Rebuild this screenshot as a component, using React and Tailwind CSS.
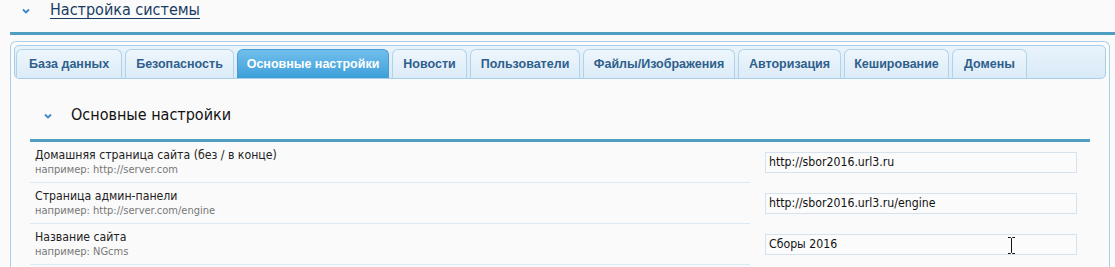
import React from "react";

const tabs = [
  { label: "База данных", w: "w-[106px]" },
  { label: "Безопасность", w: "w-[109px]" },
  { label: "Основные настройки", w: "w-[152px]", active: true },
  { label: "Новости", w: "w-[75px]" },
  { label: "Пользователи", w: "w-[110px]" },
  { label: "Файлы/Изображения", w: "w-[152px]" },
  { label: "Авторизация", w: "w-[103px]" },
  { label: "Кеширование", w: "w-[105px]" },
  { label: "Домены", w: "w-[75px]" },
];

const rows = [
  { title: "Домашняя страница сайта (без / в конце)", hint: "например: http://server.com", value: "http://sbor2016.url3.ru" },
  { title: "Страница админ-панели", hint: "например: http://server.com/engine", value: "http://sbor2016.url3.ru/engine" },
  { title: "Название сайта", hint: "например: NGcms", value: "Сборы 2016", cursor: true },
];

function Chevron() {
  return (
    <svg width="8" height="6" viewBox="0 0 8 6" className="block">
      <path d="M1 1.5 L4 4.5 L7 1.5" fill="none" stroke="#3f86c9" strokeWidth="1.8" />
    </svg>
  );
}

function IBeam() {
  return (
    <svg width="9" height="17" viewBox="0 0 9 17" className="block">
      <path d="M1 0.5 H3.5 L4.5 1.5 L5.5 0.5 H8 M4.5 1.5 V15.5 M1 16.5 H3.5 L4.5 15.5 L5.5 16.5 H8" fill="none" stroke="#111" strokeWidth="1" />
    </svg>
  );
}

export default function App() {
  return (
    <div className="w-[1115px] h-[267px] overflow-hidden bg-[#fafafa] font-['DejaVu_Sans_Condensed','DejaVu_Sans',sans-serif]">
      {/* page title */}
      <div className="flex items-center h-[20px]">
        <div className="ml-[22px] mt-[2px]">
          <Chevron />
        </div>
        <a className="ml-[20px] text-[16px] leading-none text-[#1b3c62] underline underline-offset-[3px]">Настройка системы</a>
      </div>
      <div className="ml-[10px] mt-[12px] h-[3px] bg-[#4e9fc1]" />

      {/* panel */}
      <div className="ml-[10px] mr-[5px] mt-[6px] border-l border-r border-t border-[#a9cfe8] rounded-t-[6px] h-[300px]">
        <div className="px-[3px] pt-[3px]">
          <div className="h-[34px] rounded-[5px] border border-[#a9cfe8] bg-gradient-to-b from-[#e9f3fb] to-[#d9eaf7] flex items-end pl-[1px] gap-[3px] font-['Liberation_Sans',sans-serif]">
            {tabs.map((t) =>
              t.active ? (
                <div key={t.label} className={`${t.w} h-[29px] rounded-t-[6px] border border-b-0 border-[#4b9bd2] bg-gradient-to-b from-[#71bfec] to-[#3b9fd9] text-white text-[12.5px] font-bold flex items-center justify-center`}>
                  {t.label}
                </div>
              ) : (
                <div key={t.label} className={`${t.w} h-[29px] rounded-t-[6px] border border-b-0 border-[#b1d3ea] bg-gradient-to-b from-[#eef6fc] to-[#dcebf7] text-[#2f5f8c] text-[12.5px] font-bold flex items-center justify-center`}>
                  {t.label}
                </div>
              )
            )}
          </div>
        </div>

        <div className="pl-[19px] pr-[19px]">
          <div className="flex items-center h-[48px] mt-[12px]">
            <div className="ml-[14px] mt-[2px]">
              <Chevron />
            </div>
            <div className="ml-[19px] text-[16px] text-[#111]">Основные настройки</div>
          </div>
          <div className="h-[3px] bg-[#4e9fc1]" />
          {rows.map((r) => (
            <div key={r.title} className="flex">
              <div className="w-[720px] h-[41px] border-b border-[#d9e9f5] pl-[5px] pt-[5px]">
                <div className="text-[12.2px] leading-[16px] text-[#222]">{r.title}</div>
                <div className="text-[11px] leading-[13px] text-[#777]">{r.hint}</div>
              </div>
              <div className="flex-1 pl-[15px] pt-[10px]">
                <div className="relative w-[312px] h-[21px] border border-[#d6e2ed] bg-[#fbfbfb] px-[3px] text-[12.2px] leading-[19px] text-[#111]">
                  {r.value}
                  {r.cursor ? (
                    <div className="absolute left-[241px] top-[2px]">
                      <IBeam />
                    </div>
                  ) : null}
                </div>
              </div>
            </div>
          ))}
        </div>
      </div>
    </div>
  );
}
